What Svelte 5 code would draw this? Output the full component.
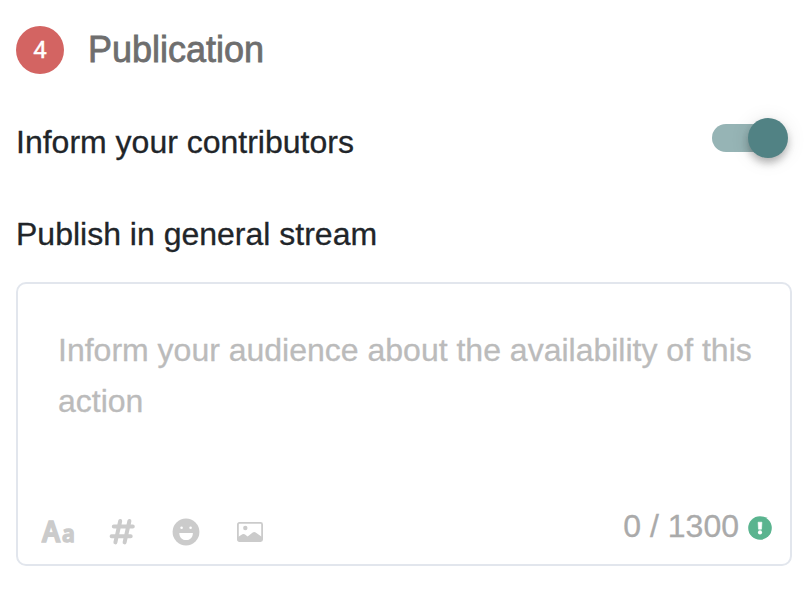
<script>
  let informed = $state(true);
  let message = $state('');
  const limit = 1300;
</script>

<main>
  <header>
    <span class="step">4</span>
    <h1>Publication</h1>
  </header>

  <div class="row">
    <span class="label">Inform your contributors</span>
    <button
      class="switch"
      class:on={informed}
      role="switch"
      aria-checked={informed}
      aria-label="Inform your contributors"
      onclick={() => (informed = !informed)}
    ><span class="thumb"></span></button>
  </div>

  <div class="label heading">Publish in general stream</div>

  <section class="editor">
    <textarea
      bind:value={message}
      maxlength={limit}
      placeholder="Inform your audience about the availability of this action"
    ></textarea>
    <footer>
      <div class="tools">
        <span class="format"><b>A</b><b class="small">a</b></span>
        <svg class="hash" width="28" height="28" viewBox="0 0 28 28">
          <path d="M11.2 3 6.4 24.4M20.4 3 15.6 24.4M4.8 8.4H23.8M2.6 18.2H21.7" />
        </svg>
        <svg class="smile" width="28" height="28" viewBox="0 0 28 28">
          <circle cx="14" cy="14" r="13.4" fill="#cbcbcb" />
          <circle cx="9.6" cy="9.7" r="1.3" fill="#fff" />
          <circle cx="18.6" cy="9.7" r="1.3" fill="#fff" />
          <path d="M7.3 14.9H20.9C20.9 19.4 18 22.1 14.1 22.1S7.3 19.4 7.3 14.9Z" fill="#fff" />
        </svg>
        <svg class="photo" width="26" height="20" viewBox="0 0 26 20">
          <rect x=".9" y=".9" width="24.2" height="18.2" rx="1.5" fill="none" stroke="#cbcbcb" stroke-width="1.8" />
          <circle cx="8.3" cy="6" r="2.2" fill="#cbcbcb" />
          <path d="M1 15 5.4 12.3Q7 11.4 8.4 12.8L10.6 14.4 15.7 10.6Q17.2 9.3 18.7 10.6L25 14.9V19H1Z" fill="#cbcbcb" />
        </svg>
      </div>
      <div class="count">
        <span>{message.length} / {limit}</span>
        <svg width="24" height="24" viewBox="0 0 24 24">
          <circle cx="12" cy="12" r="11.8" fill="#5ab48f" />
          <path d="M10.1 6.2H13.9L13.5 13.2H10.5Z" fill="#fff" stroke="#fff" stroke-width=".6" stroke-linejoin="round" />
          <circle cx="12" cy="16.4" r="2.1" fill="#fff" />
        </svg>
      </div>
    </footer>
  </section>
</main>

<style>
  :global(body) {
    background: #fff;
  }
  main {
    box-sizing: border-box;
    width: 812px;
    height: 590px;
    padding: 26px 20px 0 16px;
    font-family: 'Liberation Sans', Arial, sans-serif;
    overflow: hidden;
  }
  header {
    display: flex;
    align-items: center;
    gap: 24px;
    height: 48px;
  }
  .step {
    width: 48px;
    height: 48px;
    border-radius: 50%;
    background: #d36462;
    color: #fff;
    font: 400 24px/48px Roboto, sans-serif;
    -webkit-text-stroke: 0.4px #fff;
    text-align: center;
  }
  h1 {
    margin: 0;
    font-size: 36px;
    font-weight: 400;
    line-height: 48px;
    color: #6e6e6e;
    -webkit-text-stroke: 0.8px #6e6e6e;
  }
  .row {
    display: flex;
    justify-content: space-between;
    align-items: flex-start;
    height: 48px;
    margin-top: 44px;
  }
  .label {
    font-size: 32px;
    line-height: 48px;
    color: #212529;
    -webkit-text-stroke: 0.3px #212529;
  }
  .heading {
    margin-top: 44px;
  }
  .switch {
    display: flex;
    align-items: center;
    width: 68px;
    height: 28px;
    margin: 6px 12px 0 0;
    padding: 0;
    border: 0;
    border-radius: 14px;
    background: #b5b5b5;
  }
  .switch.on {
    justify-content: flex-end;
    background: #96b4b5;
  }
  .thumb {
    flex: none;
    width: 40px;
    height: 40px;
    margin-right: -8px;
    border-radius: 50%;
    background: #518284;
    box-shadow:
      0 6px 10px -2px rgba(0, 0, 0, 0.2),
      0 4px 8px rgba(0, 0, 0, 0.12),
      0 2px 20px rgba(0, 0, 0, 0.1);
  }
  .editor {
    box-sizing: border-box;
    display: flex;
    flex-direction: column;
    width: 776px;
    height: 284px;
    margin-top: 24px;
    border: 2px solid #e2e6ed;
    border-radius: 10px;
  }
  textarea {
    box-sizing: border-box;
    display: block;
    width: 100%;
    height: 216px;
    padding: 41px 30px 0 40px;
    border: 0;
    outline: 0;
    resize: none;
    overflow: hidden;
    background: transparent;
    font: 32px/51.2px 'Liberation Sans', Arial, sans-serif;
    color: #212529;
  }
  textarea::placeholder {
    color: #bbb;
    opacity: 1;
    -webkit-text-stroke: 0.3px #bbb;
  }
  footer {
    display: flex;
    justify-content: space-between;
    height: 56px;
    padding: 0 18px 0 24px;
  }
  .tools {
    display: flex;
    align-items: center;
    height: 64px;
  }
  .format {
    display: flex;
    align-items: baseline;
    width: 67px;
    color: #cbcbcb;
    font: 600 29px/38px 'Noto Sans', sans-serif;
    -webkit-text-stroke: 1.5px #cbcbcb;
    stroke-linejoin: round;
    transform: scaleX(0.93);
    transform-origin: left;
  }
  .format b {
    font-weight: 600;
  }
  .format .small {
    margin-left: 2px;
    font-size: 23.5px;
  }
  .hash {
    fill: none;
    stroke: #cbcbcb;
    stroke-width: 4;
    stroke-linecap: round;
  }
  .smile {
    margin-left: 35px;
  }
  .photo {
    margin-left: 37px;
  }
  .count {
    display: flex;
    align-items: center;
    gap: 9px;
    height: 56px;
    font-size: 32px;
    color: #aaa;
    -webkit-text-stroke: 0.3px #aaa;
  }
  .count span {
    height: 56px;
    line-height: 52px;
  }
</style>
